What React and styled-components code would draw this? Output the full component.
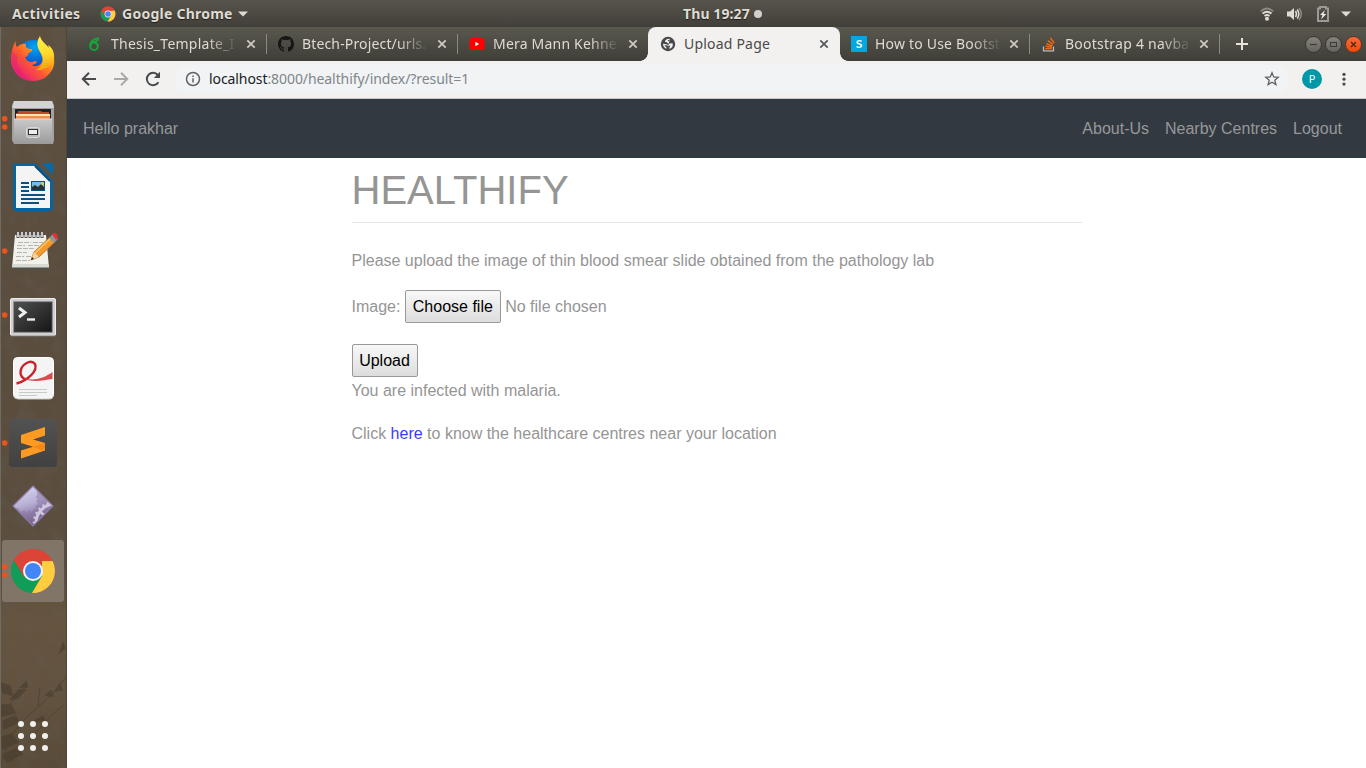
import React from 'react';
import styled, { createGlobalStyle } from 'styled-components';

const ui = '"Noto Sans", "Open Sans", sans-serif';

const Global = createGlobalStyle`
  * { box-sizing: border-box; }
  html, body { margin: 0; padding: 0; }
  body { width: 1366px; height: 768px; overflow: hidden; background: #fff; }
  svg { display: block; flex: none; }
`;

const Desktop = styled.div`
  display: flex;
  flex-direction: column;
  width: 1366px;
  height: 768px;
  overflow: hidden;
`;

/* ---------- system bar ---------- */
const SystemBar = styled.header`
  display: grid;
  grid-template-columns: 671px auto 1fr;
  align-items: center;
  height: 27px;
  flex: none;
  padding: 0 15px 0 12px;
  background: linear-gradient(#57544b, #413f39);
  color: #dfdbd2;
  font: 700 14px/26px ${ui};
  text-shadow: 0 1px 1px rgba(0, 0, 0, 0.6);
  white-space: nowrap;
`;
const BarGroup = styled.div`
  display: flex;
  align-items: center;
  justify-content: ${p => p.$end ? 'flex-end' : 'flex-start'};
`;
const BarText = styled.span`
  width: ${p => p.$w}px;
  letter-spacing: ${p => p.$ls || 0}px;
  margin-left: ${p => p.$before || 0}px;
  margin-right: ${p => p.$gap || 0}px;
`;
const Clock = styled.div`
  display: flex;
  align-items: center;
  gap: 4px;
`;
const Dot = styled.i`
  width: 8px;
  height: 8px;
  border-radius: 50%;
  background: #d2d0cb;
`;

/* ---------- dock ---------- */
const Main = styled.div`
  display: flex;
  flex: 1;
  min-height: 0;
`;
const Dock = styled.nav`
  position: relative;
  display: flex;
  flex-direction: column;
  justify-content: space-between;
  width: 67px;
  flex: none;
  border-left: 1px solid #6f6c65;
  background: linear-gradient(#5d5040, #5a4d3e 40%, #5b4e3e 72%, #65543f 80%, #62523f 90%, #594b38);
  border-right: 1px solid #4e4437;
`;
const DockTexture = styled.svg`
  position: absolute;
  inset: 0;
`;
const DockList = styled.div`
  position: relative;
  display: flex;
  flex-direction: column;
  margin-left: -1px;
`;
const DockItem = styled.svg.attrs({ width: 66, height: 64, viewBox: '0 0 66 64' })``;
const AppsGrid = styled.div`
  position: relative;
  display: grid;
  grid-template-columns: repeat(3, 6px);
  gap: 6px;
  padding: 0 0 17px 17px;
`;
const AppsDot = styled.i`
  width: 6px;
  height: 6px;
  border-radius: 50%;
  background: #f1f0ee;
`;

/* ---------- browser ---------- */
const Browser = styled.div`
  display: flex;
  flex-direction: column;
  flex: 1;
  min-width: 0;
  background: #fff;
`;
const TabStrip = styled.div`
  display: flex;
  height: 34px;
  flex: none;
  padding: 0 4px 0 8px;
  background: linear-gradient(#5a584e, #3f3e38);
`;
const Tab = styled.div`
  position: relative;
  display: flex;
  align-items: center;
  width: ${p => p.$w}px;
  flex: none;
  padding-left: 12px;
  margin-right: ${p => p.$active ? -1 : 0}px;
  border-radius: 8px 8px 0 0;
  background: ${p => p.$active ? '#f2f1f0' : 'transparent'};
  color: ${p => p.$active ? '#4a4b4c' : '#dfdbd2'};
  ${p => p.$active && `
    &::before, &::after {
      content: ''; position: absolute; bottom: 0; width: 8px; height: 8px;
    }
    &::before { left: -8px; background: radial-gradient(circle at 0 0, transparent 7.5px, #f2f1f0 8px); }
    &::after { right: -8px; background: radial-gradient(circle at 100% 0, transparent 7.5px, #f2f1f0 8px); }
  `}
  ${p => p.$line && `
    &::after { content: ''; position: absolute; right: -1px; top: 7px; width: 1px; height: 20px; background: #8b8980; }
  `}
`;
const TabTitle = styled.span`
  width: ${p => p.$w}px;
  margin: 0 4px 0 8px;
  white-space: nowrap;
  font: 14px/34px ${ui};
  letter-spacing: ${p => p.$ls || 0}px;
  ${p => p.$fade && 'mask-image: linear-gradient(90deg, #000 96px, transparent 127px);'}
`;
const NewTab = styled.div`
  display: flex;
  align-items: center;
  padding-left: 16px;
  flex: 1;
`;
const WindowButtons = styled.div`
  display: flex;
  align-items: center;
  gap: 3px;
`;
const WindowButton = styled.div`
  display: grid;
  place-items: center;
  width: 17px;
  height: 17px;
  border-radius: 50%;
  border: 1px solid ${p => p.$close ? '#5a3526' : '#36352f'};
  background: ${p => p.$close ? 'linear-gradient(#fa6a3c, #f04a08)' : 'linear-gradient(#85837b, #66645d)'};
`;
const Toolbar = styled.div`
  display: flex;
  align-items: center;
  height: 38px;
  flex: none;
  padding: 0 14px 1px;
  background: #f2f1f0;
  border-bottom: 1px solid #c6cbc9;
`;
const NavIcons = styled.div`
  display: flex;
  gap: 16px;
  margin-right: 14px;
`;
const Address = styled.div`
  display: flex;
  align-items: center;
  flex: 1;
  height: 28px;
  padding: 0 9px 0 10px;
  border-radius: 14px;
  background: #f1f3f4;
`;
const Url = styled.span`
  flex: 1;
  margin-left: 8px;
  font: 14px/28px ${ui};
  letter-spacing: -0.08px;
  color: #80868b;
  b { font-weight: 400; color: #202124; }
`;
const Avatar = styled.div`
  width: 20px;
  height: 20px;
  margin: 0 14px 0 13px;
  border-radius: 50%;
  background: #0097a7;
  color: #fff;
  font: 11px/20px ${ui};
  text-align: center;
`;

/* ---------- web page ---------- */
const SiteNav = styled.div`
  display: flex;
  align-items: center;
  justify-content: space-between;
  height: 59px;
  flex: none;
  padding: 0 24px 0 16px;
  background: #333941;
  color: #96989a;
  font: 16px/24px "Liberation Sans", Arial, sans-serif;
`;
const SiteLinks = styled.div`
  display: flex;
  gap: 16px;
`;
const Content = styled.main`
  width: 730px;
  margin-left: 284.5px;
  padding-top: 8px;
  color: #959595;
  font: 16px/24px "Liberation Sans", Arial, sans-serif;
`;
const Heading = styled.h1`
  margin: 0 0 26px;
  padding-bottom: 8px;
  border-bottom: 1px solid #e5e5e5;
  font-size: 40px;
  font-weight: 400;
  line-height: 48px;
`;
const Line = styled.p`
  margin: 0 0 ${p => p.$gap || 0}px;
`;
const FileRow = styled.div`
  display: flex;
  align-items: center;
  gap: 4.4px;
  margin-bottom: 21px;
`;
const Button = styled.button`
  display: block;
  width: ${p => p.$w}px;
  height: 33px;
  margin-bottom: ${p => p.$gap || 0}px;
  padding: 0;
  border: 1px solid #999;
  border-radius: 2px;
  background: linear-gradient(#f8f8f8, #dddddd);
  color: #000;
  font: 16px/24px "Liberation Sans", Arial, sans-serif;
`;
const Link = styled.a`
  color: #3a3aff;
`;

/* ---------- drawings ---------- */
const ChromeMark = ({ cx, cy, r }) => (
  <g transform={`translate(${cx} ${cy}) scale(${r / 22})`}>
    <circle r="22" fill="#db4437" />
    <path d="M-19 -11 A22 22 0 0 0 -1 22 L9 5 -9 5Z" fill="#0f9d58" />
    <path d="M19.5 -10 A22 22 0 0 1 -1 22 L9 5 9 -10Z" fill="#ffcd40" />
    <path d="M-19 -11 L-9 6 -2 -10 19.5 -10 A22 22 0 0 0 -19 -11Z" fill="#db4437" />
    <circle r="10" fill="#f4f4f4" />
    <circle r="8" fill="#4285f4" />
  </g>
);
const Running = ({ n = 1 }) => n === 2
  ? <g fill="#e95420"><circle cx="4.7" cy="27.7" r="2.8" /><circle cx="4.7" cy="36" r="2.8" /></g>
  : <circle cx="4.7" cy="32" r="2.8" fill="#e95420" />;

const Firefox = () => (
  <DockItem>
    <defs>
      <linearGradient id="fx" x1="1" y1="0" x2="0.1" y2="0.9">
        <stop offset="0" stopColor="#ffe226" /><stop offset=".35" stopColor="#ffa31a" />
        <stop offset=".62" stopColor="#ff5634" /><stop offset="1" stopColor="#e31587" />
      </linearGradient>
      <linearGradient id="fxy" x1=".5" y1="0" x2=".6" y2="1">
        <stop offset="0" stopColor="#fff04a" /><stop offset=".5" stopColor="#ffdc2c" /><stop offset="1" stopColor="#ff980e" />
      </linearGradient>
      <radialGradient id="fxb" cx=".55" cy=".2" r=".8">
        <stop offset="0" stopColor="#02a8f4" /><stop offset=".5" stopColor="#0a61cf" /><stop offset="1" stopColor="#391a85" />
      </radialGradient>
    </defs>
    <circle cx="33" cy="31" r="18" fill="url(#fxb)" />
    <path d="M16 14 C15 17 16 19 17 20 C20 17 24 16 26 17 C25 20 27 22 32 22 C33 24 30 25 28 27 C28 29 27 30 25 30 C27 35 31 36 35 34 C38 34 37 37 32 38 C35 41 42 38 43 33 C44 27 42 22 38 19 L46 20 C54 24 56 34 53 41 C49 50 41 54 33 54 C20 54 11 44 11 32 C11 26 13 17 16 14Z" fill="url(#fx)" />
    <path d="M40 9 C36 15 37 20 40 25 C44 31 44 39 36 43 C44 44 52 39 54 32 C55 26 52 20 48 18 L49 21 C46 17 41 14 40 9Z" fill="url(#fxy)" />
    <path d="M12 25 C10 38 19 52 32 54 C23 48 16 41 17 29Z" fill="#e21b76" opacity=".35" />
  </DockItem>
);
const Files = () => (
  <DockItem>
    <defs><linearGradient id="fl" x2="0" y2="1"><stop stopColor="#c9c9c9" /><stop offset="1" stopColor="#9b9b9b" /></linearGradient></defs>
    <path d="M14 10H52L54 14V49L53 53H14L12 49V14Z" fill="#a2a2a2" />
    <path d="M14 10H52L54 17H12Z" fill="#d4d4d4" />
    <rect x="15" y="18" width="36" height="11" fill="#222" />
    <path d="M18 20H41L42 21H49V24H16V22H18Z" fill="#c5491d" />
    <path d="M16 23H50V25H16Z" fill="#ffe3ba" /><path d="M16 25H50V28H16Z" fill="#f09043" />
    <path d="M14 28H52V53H14Z" fill="url(#fl)" />
    <path d="M14 28H52" stroke="#ddd" />
    <rect x="26.5" y="36.5" width="13" height="10" rx="2" fill="#bbb" stroke="#d9d9d9" />
    <rect x="28.5" y="38.5" width="9" height="5" fill="#eee" stroke="#333" />
    <Running n={2} />
  </DockItem>
);
const Writer = () => (
  <DockItem>
    <path d="M16 8H36L53 26V53Q53 56 50 56H16Q13 56 13 53V11Q13 8 16 8Z" fill="#0a639c" />
    <path d="M16 11H35L50 26V53H16Z" fill="#f4f4f4" />
    <path d="M35 11L50 26" stroke="#0a4d7a" strokeWidth="2" />
    <path d="M41 8H53V20Z" fill="#0769a6" />
    <path d="M21 28H29M21 32H29M21 36H29M21 40H45M21 44H45M21 48H39" stroke="#0a527f" strokeWidth="2" />
    <rect x="31.5" y="26.5" width="13" height="9" fill="#74bde8" stroke="#0a527f" />
    <path d="M32 35V32L35 30 38 32 41 29 44 32V35Z" fill="#26323a" /><circle cx="42.5" cy="28.5" r="1.5" fill="#f1c832" />
  </DockItem>
);
const Notes = () => (
  <DockItem>
    <path d="M15 16H46L49 49H12Z" fill="#f1f1ec" /><path d="M13 45H48.5L49 49H12Z" fill="#d5d9cf" />
    <path d="M12 49H49" stroke="#45544e" />
    <path d="M18 13V19M22 13V19M26 13V19M30 13V19M34 13V19M38 13V19M42 13V19" stroke="#555" strokeWidth="3" />
    <path d="M18 13V18M22 13V18M26 13V18M30 13V18M34 13V18M38 13V18M42 13V18" stroke="#e5e5e5" strokeWidth="1.6" />
    <path d="M18 23.500H31M33 23.500H43M17 26.500H25M28 26.500H39M17 29.500H35M17 33.500H27M16 37.500H24M26 37.500H32M16 41.500H30" stroke="#b4b4b2" strokeDasharray="5 1" />
    <path d="M31 41L34 33 50 18 55 23 39 38Z" fill="#f39a2d" stroke="#b7641c" strokeWidth=".8" />
    <path d="M31 41L34 33 39 38Z" fill="#f0d3a0" /><path d="M31 41L32 38 34 40Z" fill="#222" />
    <path d="M35 34L51 19" stroke="#ffc570" strokeWidth="1.5" />
    <path d="M49 19L53 15 58 20 54 24Z" fill="#8c9799" /><path d="M52 15Q57 12 58 19L56 21Z" fill="#e5303a" />
    <Running />
  </DockItem>
);
const Terminal = () => (
  <DockItem>
    <defs><linearGradient id="tm" x2="1" y2="1"><stop stopColor="#4f5050" /><stop offset="1" stopColor="#151515" /></linearGradient></defs>
    <rect x="10.5" y="15.5" width="45" height="37" rx="1.5" fill="#cfd0cf" stroke="#ececec" />
    <path d="M11 53H55" stroke="#777" />
    <rect x="14" y="19" width="38" height="30" fill="url(#tm)" stroke="#4d4d4d" />
    <path d="M19 25L25 29.5 19 34" fill="none" stroke="#eee" strokeWidth="3" /><path d="M27 36.5H35" stroke="#eee" strokeWidth="2.4" />
    <Running />
  </DockItem>
);
const DocViewer = () => (
  <DockItem>
    <rect x="13.5" y="10.5" width="40" height="41" rx="4" fill="#f4f4f4" stroke="#fff" />
    <path d="M14 49Q15 52 18 52H50Q53 52 53 49" fill="none" stroke="#c7c7c7" />
    <path d="M16.500 36.500C28 33 38 24 35 17C31 12 20.500 17 20.500 26C21 30 23 31.500 26 32.500" fill="none" stroke="#c9242c" strokeWidth="2.4" />
    <path d="M22 30C31 35 43 32 52.500 25V32C43 33 32 37 22 30Z" fill="#dc4a50" />
    <path d="M19 42.5H47M19 45.5H47M19 48.5H37" stroke="#c9c9c9" />
  </DockItem>
);
const Sublime = () => (
  <DockItem>
    <defs><linearGradient id="sb" x2="0" y2="1"><stop stopColor="#525252" /><stop offset="1" stopColor="#414141" /></linearGradient></defs>
    <rect x="9" y="8" width="48" height="48" rx="3" fill="url(#sb)" />
    <path d="M21 24L45 16V24.500L33 28.500 45 32V39.500L21 47.500V39.500L33 35.800 21 32Z" fill="#ff9a22" />
    <path d="M33 35.800L45 32V38L42 39Z" fill="#e97b0a" opacity=".55" />
    <Running />
  </DockItem>
);
const GearDiamond = () => (
  <DockItem>
    <defs>
      <linearGradient id="gd" x2=".3" y2="1"><stop stopColor="#dedcf2" /><stop offset=".5" stopColor="#b9b2d6" /><stop offset="1" stopColor="#735a86" /></linearGradient>
      <clipPath id="gc"><path d="M33 11L53 31 33 51 13 31Z" /></clipPath>
    </defs>
    <g clipPath="url(#gc)">
      <rect x="13" y="10" width="40" height="42" fill="url(#gd)" />
      <path d="M37 10V21L35 22 38 24 36 26 38 29 35 31 36 34 33 34 32 37 29 35 27 38 24 35 21 37 18 33 13 33V52H53V10Z" fill="#7c6899" opacity=".4" />
      <circle cx="55" cy="48" r="19" fill="none" stroke="#cfc6e0" strokeWidth="3" /><circle cx="55" cy="48" r="21" fill="none" stroke="#cfc6e0" strokeWidth="2.5" strokeDasharray="2 3" />
      <path d="M39 36L48 43" stroke="#cfc6e0" strokeWidth="2.500" />
    </g>
    <path d="M33 11L53 31 33 51 13 31Z" fill="none" stroke="#8c7ba5" strokeWidth="1.2" strokeLinejoin="round" />
  </DockItem>
);
const ChromeDock = () => (
  <DockItem>
    <rect x="2" y="1" width="62" height="62" rx="3" fill="#817567" />
    <ChromeMark cx={33} cy={32} r={22} /><Running n={2} />
  </DockItem>
);
const Texture = () => (
  <DockTexture width="65" height="741" viewBox="0 0 65 741">
    <filter id="grain" x="0" y="0" width="1" height="1">
      <feTurbulence type="fractalNoise" baseFrequency=".06" numOctaves="3" seed="4" />
      <feColorMatrix values="0 0 0 0 .13  0 0 0 0 .11  0 0 0 0 .09  1.6 0 0 0 -.7" />
    </filter>
    <rect width="65" height="741" filter="url(#grain)" opacity=".45" />
    <g fill="none" stroke="#443a2d" opacity=".55">
      <path d="M0 735L12 706 24 692 37 680 53 665 65 650M0 690L14 671 27 657M8 738L28 714 48 691 62 678M37 680L39 660" strokeWidth="1" />
      <path d="M0 656l9 3 2 9-9-2zM10 672l8-9 6 0-7 8zM0 678l10 0 4 8-13 3zM2 694l12-5 4 6-15 7zM1 710l10-3 6 8-15 7zM2 728l12-6 7 5-15 8zM20 660l5-5 1 5zM45 668l5-4 2 5zM54 664l5-7 2 6zM34 694l8-5 2 5zM59 625l3-9 2 5z" fill="#443a2d" strokeWidth="1.500" />
    </g>
  </DockTexture>
);

const TabClose = ({ dark }) => (
  <svg width="10" height="10" viewBox="0 0 10 10"><path d="M1.3 1.3L8.7 8.7M8.7 1.3L1.3 8.7" stroke={dark ? '#55565a' : '#cfccc3'} strokeWidth="1.7" /></svg>
);
const favicons = {
  thesis: <svg width="16" height="16" viewBox="0 0 16 16" fill="none" stroke="#13a83b" strokeWidth="2"><circle cx="7" cy="10.2" r="3.8" /><path d="M3.4 10C3.2 6 6 3 12 2.2M6 6.5C8 6 10 5.500 11.5 3.200" strokeWidth="1.8" /></svg>,
  github: <svg width="16" height="16" viewBox="0 0 16 16" fill="#161614"><path d="M8 0C3.580 0 0 3.580 0 8c0 3.540 2.290 6.530 5.470 7.590.4.070.55-.17.55-.38 0-.19-.01-.82-.01-1.490-2.010.37-2.530-.49-2.690-.94-.09-.23-.48-.94-.82-1.130-.28-.15-.68-.52-.01-.53.63-.01 1.080.58 1.230.82.72 1.210 1.870.87 2.330.66.070-.52.28-.87.51-1.070-1.780-.2-3.640-.89-3.640-3.950 0-.87.31-1.590.82-2.150-.08-.2-.36-1.020.08-2.120 0 0 .67-.21 2.200.82a7.500 7.500 0 0 1 4 0c1.530-1.040 2.200-.82 2.200-.82.44 1.100.16 1.920.08 2.120.51.56.82 1.270.82 2.150 0 3.070-1.870 3.750-3.650 3.950.29.25.54.73.54 1.480 0 1.070-.01 1.930-.01 2.200 0 .21.15.46.55.38A8.010 8.010 0 0 0 16 8c0-4.420-3.580-8-8-8z" /></svg>,
  youtube: <svg width="16" height="16" viewBox="0 0 16 16"><rect x=".5" y="2" width="15" height="12" rx="2.500" fill="#f00" /><path d="M6.300 5.800L10.200 8 6.300 10.200Z" fill="#fff" /></svg>,
  globe: <svg width="16" height="16" viewBox="0 0 16 16"><circle cx="8" cy="8" r="7.200" fill="#47484a" /><path d="M9.800 2.800C7.500 2.500 5.200 3.600 5 5.300C5.200 6.800 7 6.300 7.700 7C8.300 8 9.800 7.800 11 7.300L12.800 7.600C13.300 10.200 11.800 12.200 9.600 13L9.200 11.600C10.500 11 10.200 9.600 9.200 9.400C7.600 9.300 7.600 8.300 6.300 8.200L3 7.700C2.900 9.800 4.300 12 6.300 12.800L6.500 11.600 4.300 9.200 6.600 9.300C7.500 9.700 8.300 10 8.400 10.800L7.700 13.200" fill="#f2f1f0" /><path d="M7.500 4.200L9.500 4 8.800 5.600Z" fill="#47484a" /></svg>,
  stack: <svg width="16" height="16" viewBox="0 0 16 16" fill="none"><path d="M2.500 10.500V14.800H12.500V10.500" stroke="#bcbbbb" strokeWidth="1.300" /><path d="M4.300 12.600H10.800M4.500 10.300L10.900 11.300M5.200 7.600L11.300 10M6.800 4.600L12 8.500M9.300 1.800L13.200 7" stroke="#f46a10" strokeWidth="1.400" /></svg>,
};
const SquareIcon = styled.span`
  width: 16px;
  height: 16px;
  flex: none;
  background: #00a8df;
  color: #fff;
  font: 700 12px/16px Lato, sans-serif;
  text-align: center;
`;

const tabs = [
  { icon: favicons.thesis, title: 'Thesis_Template_I', line: true, w: 191, tw: 131, ls: 0.25 },
  { icon: favicons.github, title: 'Btech-Project/urls.', line: true, w: 191, tw: 131, ls: 0.15 },
  { icon: favicons.youtube, title: 'Mera Mann Kehne', w: 191, tw: 131, ls: 0.2 },
  { icon: favicons.globe, title: 'Upload Page', active: true, w: 192, tw: 131, ls: 0.2 },
  { icon: <SquareIcon>S</SquareIcon>, title: 'How to Use Bootst', line: true, w: 190, tw: 130, ls: 0.2 },
  { icon: favicons.stack, title: 'Bootstrap 4 navba', line: true, w: 190, tw: 130, ls: 0.25 },
];

export default function App() {
  return (
    <Desktop>
      <Global />
      <SystemBar>
        <BarGroup>
          <BarText $w={68} $gap={20} $ls={0.35}>Activities</BarText>
          <svg width="16" height="16" viewBox="0 0 16 16"><ChromeMark cx={8} cy={8} r={7.5} /></svg>
          <BarText $w={111} $before={6} $gap={5} $ls={0.25}>Google Chrome</BarText>
          <svg width="10" height="6" viewBox="0 0 10 6"><path d="M0 .5H10L5 5.500Z" fill="#dfdbd2" /></svg>
        </BarGroup>
        <Clock><BarText $w={67} $ls={0.1}>Thu 19:27</BarText><Dot /></Clock>
        <BarGroup $end>
          <svg width="91" height="18" viewBox="0 0 91 18" fill="none">
            <path d="M0.800 6.300Q7 .8 13.200 6.300" stroke="#8b8982" strokeWidth="1.800" />
            <path d="M2.500 8.600Q7 4.800 11.500 8.600M4.500 11Q7 9 9.500 11" stroke="#dfdbd2" strokeWidth="1.800" />
            <circle cx="7" cy="13.700" r="2" fill="#dfdbd2" />
            <path d="M27 6.500H30L34 3V15L30 11.500H27Z" fill="#dfdbd2" />
            <path d="M35.500 6Q37.500 9 35.500 12M37.300 4.500Q40.300 9 37.300 13.500" stroke="#dfdbd2" strokeWidth="1.500" />
            <path d="M39 3Q43.500 9 39 15" stroke="#8b8982" strokeWidth="1.500" />
            <path d="M60 3.500H58V16H68V3.500H66V2H60Z" stroke="#9b9992" strokeWidth="2" />
            <path d="M65 5L60 10H62.500L61 14.500 66.200 9H63.500Z" fill="#eee" />
            <path d="M81 6.500H91L86 11.500Z" fill="#dfdbd2" />
          </svg>
        </BarGroup>
      </SystemBar>
      <Main>
        <Dock>
          <Texture />
          <DockList>
            <Firefox /><Files /><Writer /><Notes /><Terminal /><DocViewer /><Sublime /><GearDiamond /><ChromeDock />
          </DockList>
          <AppsGrid>{Array.from({ length: 9 }, (_, i) => <AppsDot key={i} />)}</AppsGrid>
        </Dock>
        <Browser>
          <TabStrip>
            {tabs.map(t => (
              <Tab key={t.title} $active={t.active} $line={t.line} $w={t.w}>
                {t.icon}
                <TabTitle $fade={!t.active} $ls={t.ls} $w={t.tw}>{t.title}</TabTitle>
                <TabClose dark={t.active} />
              </Tab>
            ))}
            <NewTab><svg width="14" height="14" viewBox="0 0 14 14"><path d="M7 1V13M1 7H13" stroke="#e6e3db" strokeWidth="2" /></svg></NewTab>
            <WindowButtons>
              <WindowButton><svg width="9" height="9" viewBox="0 0 9 9"><path d="M1 4.500H8" stroke="#3c3b37" strokeWidth="1.200" /></svg></WindowButton>
              <WindowButton><svg width="9" height="9" viewBox="0 0 9 9"><rect x="1.500" y="2.500" width="6" height="4" fill="none" stroke="#3c3b37" /></svg></WindowButton>
              <WindowButton $close><svg width="9" height="9" viewBox="0 0 9 9"><path d="M2 2L7 7M7 2L2 7" stroke="#4a2a1a" strokeWidth="1.300" /></svg></WindowButton>
            </WindowButtons>
          </TabStrip>
          <Toolbar>
            <NavIcons>
              <svg width="16" height="16" viewBox="0 0 16 16" fill="none" stroke="#4a4b4d" strokeWidth="2"><path d="M15 8H2.500M8 1.800L1.800 8 8 14.200" /></svg>
              <svg width="16" height="16" viewBox="0 0 16 16" fill="none" stroke="#aaa9a8" strokeWidth="2"><path d="M1 8H13.500M8 1.800L14.200 8 8 14.200" /></svg>
              <svg width="16" height="16" viewBox="0 0 16 16" fill="none" stroke="#4a4b4d" strokeWidth="2"><path d="M13.400 11.200A6.200 6.200 0 1 1 12.800 4" /><path d="M15 .8V7H8.800Z" fill="#4a4b4d" stroke="none" /></svg>
            </NavIcons>
            <Address>
              <svg width="16" height="16" viewBox="0 0 16 16" fill="none" stroke="#5f6368" strokeWidth="1.500"><circle cx="8" cy="8" r="6.500" /><path d="M8 7.200V11.500M8 4.500V6" /></svg>
              <Url><b>localhost</b>:8000/healthify/index/?result=1</Url>
              <svg width="16" height="16" viewBox="0 0 16 16" fill="none" stroke="#5f6368" strokeWidth="1.300"><path d="M8 1.800L9.700 6 14.200 6.300 10.800 9.200 11.900 13.600 8 11.200 4.100 13.600 5.200 9.200 1.800 6.300 6.300 6Z" /></svg>
            </Address>
            <Avatar>P</Avatar>
            <svg width="16" height="16" viewBox="0 0 16 16" fill="#4a4b4d"><circle cx="8" cy="3.300" r="1.600" /><circle cx="8" cy="8.200" r="1.600" /><circle cx="8" cy="13.100" r="1.600" /></svg>
          </Toolbar>
          <SiteNav>
            <span>Hello prakhar</span>
            <SiteLinks><span>About-Us</span><span>Nearby Centres</span><span>Logout</span></SiteLinks>
          </SiteNav>
          <Content>
            <Heading>HEALTHIFY</Heading>
            <Line $gap={17}>Please upload the image of thin blood smear slide obtained from the pathology lab</Line>
            <FileRow><span>Image:</span><Button $w={96}>Choose file</Button><span>No file chosen</span></FileRow>
            <Button $w={66} $gap={2}>Upload</Button>
            <Line $gap={19}>You are infected with malaria.</Line>
            <Line>Click <Link>here</Link> to know the healthcare centres near your location</Line>
          </Content>
        </Browser>
      </Main>
    </Desktop>
  );
}
